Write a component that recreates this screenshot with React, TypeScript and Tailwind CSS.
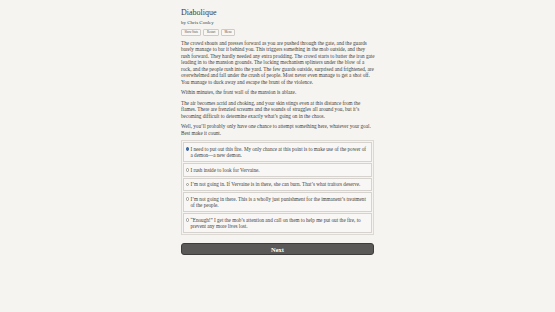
const paragraphs = [
  "The crowd shouts and presses forward as you are pushed through the gate, and the guards barely manage to bar it behind you. This triggers something in the mob outside, and they rush forward. They hardly needed any extra prodding. The crowd starts to batter the iron gate leading in to the mansion grounds. The locking mechanism splinters under the blow of a rock, and the people rush into the yard. The few guards outside, surprised and frightened, are overwhelmed and fall under the crush of people. Most never even manage to get a shot off. You manage to duck away and escape the brunt of the violence.",
  "Within minutes, the front wall of the mansion is ablaze.",
  "The air becomes acrid and choking, and your skin stings even at this distance from the flames. There are frenzied screams and the sounds of struggles all around you, but it\u2019s becoming difficult to determine exactly what\u2019s going on in the chaos.",
  "Well, you\u2019ll probably only have one chance to attempt something here, whatever your goal. Best make it count.",
];

const options = [
  "I need to put out this fire. My only chance at this point is to make use of the power of a demon\u2014a new demon.",
  "I rush inside to look for Vervaine.",
  "I\u2019m not going in. If Vervaine is in there, she can burn. That\u2019s what traitors deserve.",
  "I\u2019m not going in there. This is a wholly just punishment for the immanent\u2019s treatment of the people.",
  "\u201cEnough!\u201d I get the mob\u2019s attention and call on them to help me put out the fire, to prevent any more lives lost.",
];

export default function App() {
  return (
    <div
      className="w-[555px] h-[312px] overflow-hidden bg-[#f6f4f1] text-[#403e3b]"
      style={{ fontFamily: '"Liberation Serif", "Times New Roman", serif' }}
    >
      <div className="w-[193px] ml-[181px] pt-[8px]">
        <h1 className="text-[8px] leading-[10px] text-[#3d3c3a]">Diabolique</h1>
        <div className="text-[5px] leading-[7px] mt-[1px]">by Chris Conley</div>
        <div className="flex gap-[2px] mt-[3px]">
          {["Show Stats", "Restart", "Menu"].map((b) => (
            <span
              key={b}
              className="border-[0.5px] border-[#cfccc8] bg-[#f8f7f5] rounded-[1px] px-[2.5px] text-[3px] leading-[4.5px] text-[#55534f]"
            >
              {b}
            </span>
          ))}
        </div>
        <div className="mt-[4px] w-[194px] text-[5.2px] leading-[6.5px]">
          {paragraphs.map((p, i) => (
            <p key={i} className="mb-[4px]">
              {p}
            </p>
          ))}
        </div>
        <div className="border-[0.5px] border-[#dcd9d5] p-[1px] flex flex-col gap-[1px] text-[5.15px] leading-[6.5px]">
          {options.map((o, i) => (
            <div
              key={i}
              className="border-[0.5px] border-[#d6d3cf] bg-[#f8f7f5] px-[1.5px] py-[2.5px] flex items-start"
            >
              <span className="w-[5px] shrink-0 flex pt-[1.5px]">
                {i === 0 ? (
                  <span className="w-[3.5px] h-[3.5px] rounded-full bg-[#3f73b8] border-[0.5px] border-[#2f5f9e]" />
                ) : (
                  <span className="w-[3.5px] h-[3.5px] rounded-full bg-white border-[0.5px] border-[#9a9894]" />
                )}
              </span>
              <span>{o}</span>
            </div>
          ))}
        </div>
        <button className="mt-[3px] w-full h-[12px] rounded-[3px] bg-[#5b5957] text-white text-[6.5px] font-bold leading-[12px] border-[0.5px] border-[#3f3d3b]">
          Next
        </button>
      </div>
    </div>
  );
}
